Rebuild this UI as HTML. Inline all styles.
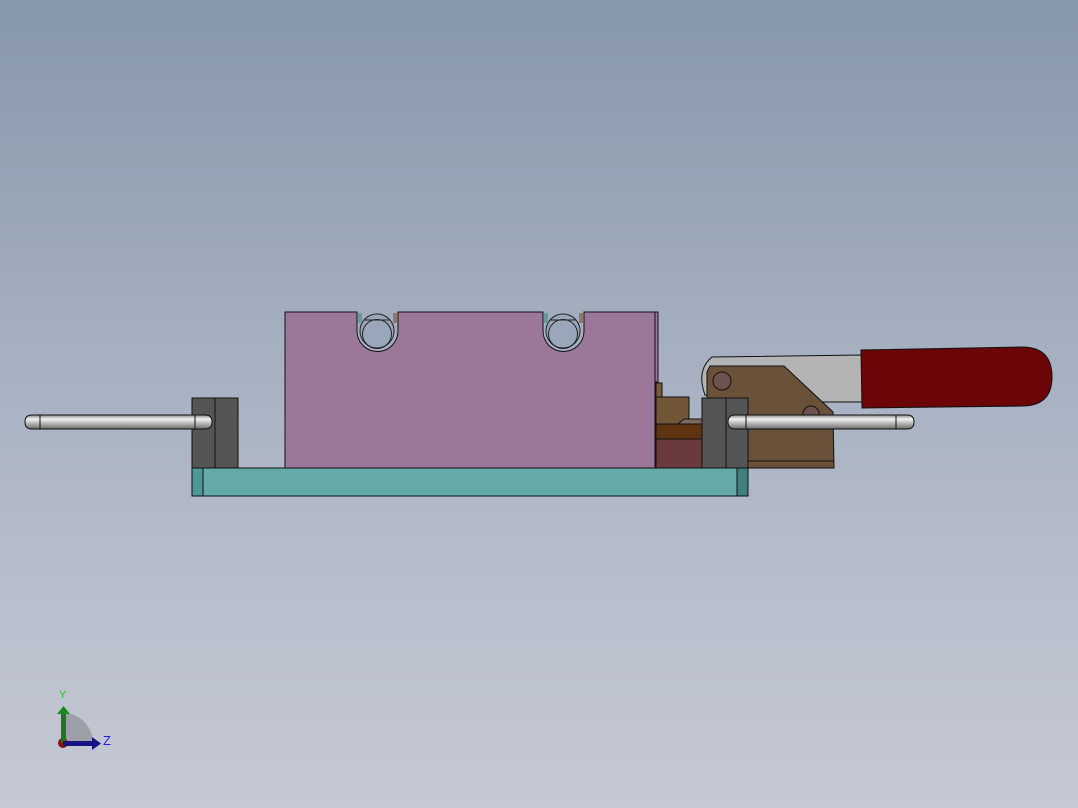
<!DOCTYPE html>
<html><head><style>
html,body{margin:0;padding:0;width:1078px;height:808px;overflow:hidden}
body{background:linear-gradient(#8797ab 0%,#a3aebf 40%,#b9bfcc 75%,#c6c9d5 100%)}
</style></head><body>
<svg width="1078" height="808" viewBox="0 0 1078 808" style="position:absolute;left:0;top:0">
<defs>
<linearGradient id="pin" x1="0" y1="0" x2="0" y2="1">
<stop offset="0" stop-color="#8a8a8a"/><stop offset="0.3" stop-color="#f2f2f2"/><stop offset="0.6" stop-color="#b8b8b8"/><stop offset="1" stop-color="#6a6a6a"/>
</linearGradient>
</defs>
<g stroke="#111" stroke-width="1">
<path d="M712 357 L862 355 L862 402 L748 402 L705 395 Q696 370 712 357 Z" fill="#b4b4b4"/>
<path d="M861 350 L1022 347 Q1052 347 1052 377 Q1052 406 1022 406 L862 408 Z" fill="#6b0507"/>
<path d="M710 366 L784 366 L833 412 L834 468 L707 468 L707 372 Z" fill="#6a513a"/>
<line x1="748" y1="461" x2="834" y2="461"/>
<circle cx="722" cy="381" r="9" fill="#6d5250"/>
<circle cx="811" cy="414" r="8" fill="#6d5250"/>
<path d="M285 312 L357 312 L357 331 A20.5 20.5 0 0 0 398 331 L398 312 L543 312 L543 331 A20.5 20.5 0 0 0 584 331 L584 312 L655 312 L655 468 L285 468 Z" fill="#9b7799"/>
<rect x="655" y="312" width="3" height="70" fill="#9b7799"/>
<g fill="#9aa6b9" stroke="#222">
<path d="M360 331 A17 17 0 0 0 394 331 A17 17 0 0 0 360 331 Z M364 320 L390 320"/>
<path d="M546 331 A17 17 0 0 0 580 331 A17 17 0 0 0 546 331 Z M550 320 L576 320"/>
</g>
<g fill="none" stroke="#222"><circle cx="377" cy="334" r="14.5"/><circle cx="563" cy="334" r="14.5"/></g>
<rect x="358" y="313" width="4" height="10" fill="#6a9a98" stroke="none"/>
<rect x="393" y="313" width="4" height="10" fill="#8a7a6a" stroke="none"/>
<rect x="544" y="313" width="4" height="10" fill="#6a9a98" stroke="none"/>
<rect x="579" y="313" width="4" height="10" fill="#8a7a6a" stroke="none"/>
<rect x="656" y="383" width="6" height="14" fill="#7a5a3a"/>
<rect x="656" y="397" width="33" height="28" fill="#735638"/>
<path d="M678 424 L684 419 L702 419 L702 424Z" fill="#7a6a5a"/>
<rect x="656" y="424" width="46" height="15" fill="#5f3310"/>
<rect x="656" y="439" width="46" height="29" fill="#6b3a3c"/>
<rect x="192" y="398" width="23" height="70" fill="#555"/>
<rect x="215" y="398" width="23" height="70" fill="#555"/>
<rect x="702" y="398" width="24" height="70" fill="#555"/>
<rect x="726" y="398" width="22" height="70" fill="#555"/>
<rect x="192" y="468" width="556" height="28" fill="#63aaa8"/>
<rect x="192" y="468" width="11" height="28" fill="#4e9896"/>
<rect x="737" y="468" width="11" height="28" fill="#3f7f7d"/>
<path d="M32 415 L205 415 Q212 415 212 422 Q212 429 205 429 L32 429 Q25 429 25 422 Q25 415 32 415Z" fill="url(#pin)"/>
<line x1="40" y1="415" x2="40" y2="429"/>
<line x1="195" y1="415" x2="195" y2="429"/>
<path d="M735 415 L907 415 Q914 415 914 422 Q914 429 907 429 L735 429 Q728 429 728 422 Q728 415 735 415Z" fill="url(#pin)"/>
<line x1="746" y1="415" x2="746" y2="429"/>
<line x1="896" y1="415" x2="896" y2="429"/>
</g>
<path d="M63 743 L63 713 A30 30 0 0 1 93 743 Z" fill="#9da0a8"/>
<circle cx="63" cy="743" r="5" fill="#8a1010"/>
<rect x="61" y="712" width="5" height="31" fill="#1a7a1a"/>
<path d="M57 714 L63.5 706 L70 714Z" fill="#1a8a1a"/>
<rect x="63" y="741" width="30" height="5" fill="#151580"/>
<path d="M92 737 L101 743.5 L92 750Z" fill="#151580"/>
<text x="59" y="698" font-family="Liberation Sans,sans-serif" font-size="11" fill="#2c2">Y</text>
<text x="103" y="745" font-family="Liberation Sans,sans-serif" font-size="13" fill="#22d">Z</text>
</svg>
</body></html>
